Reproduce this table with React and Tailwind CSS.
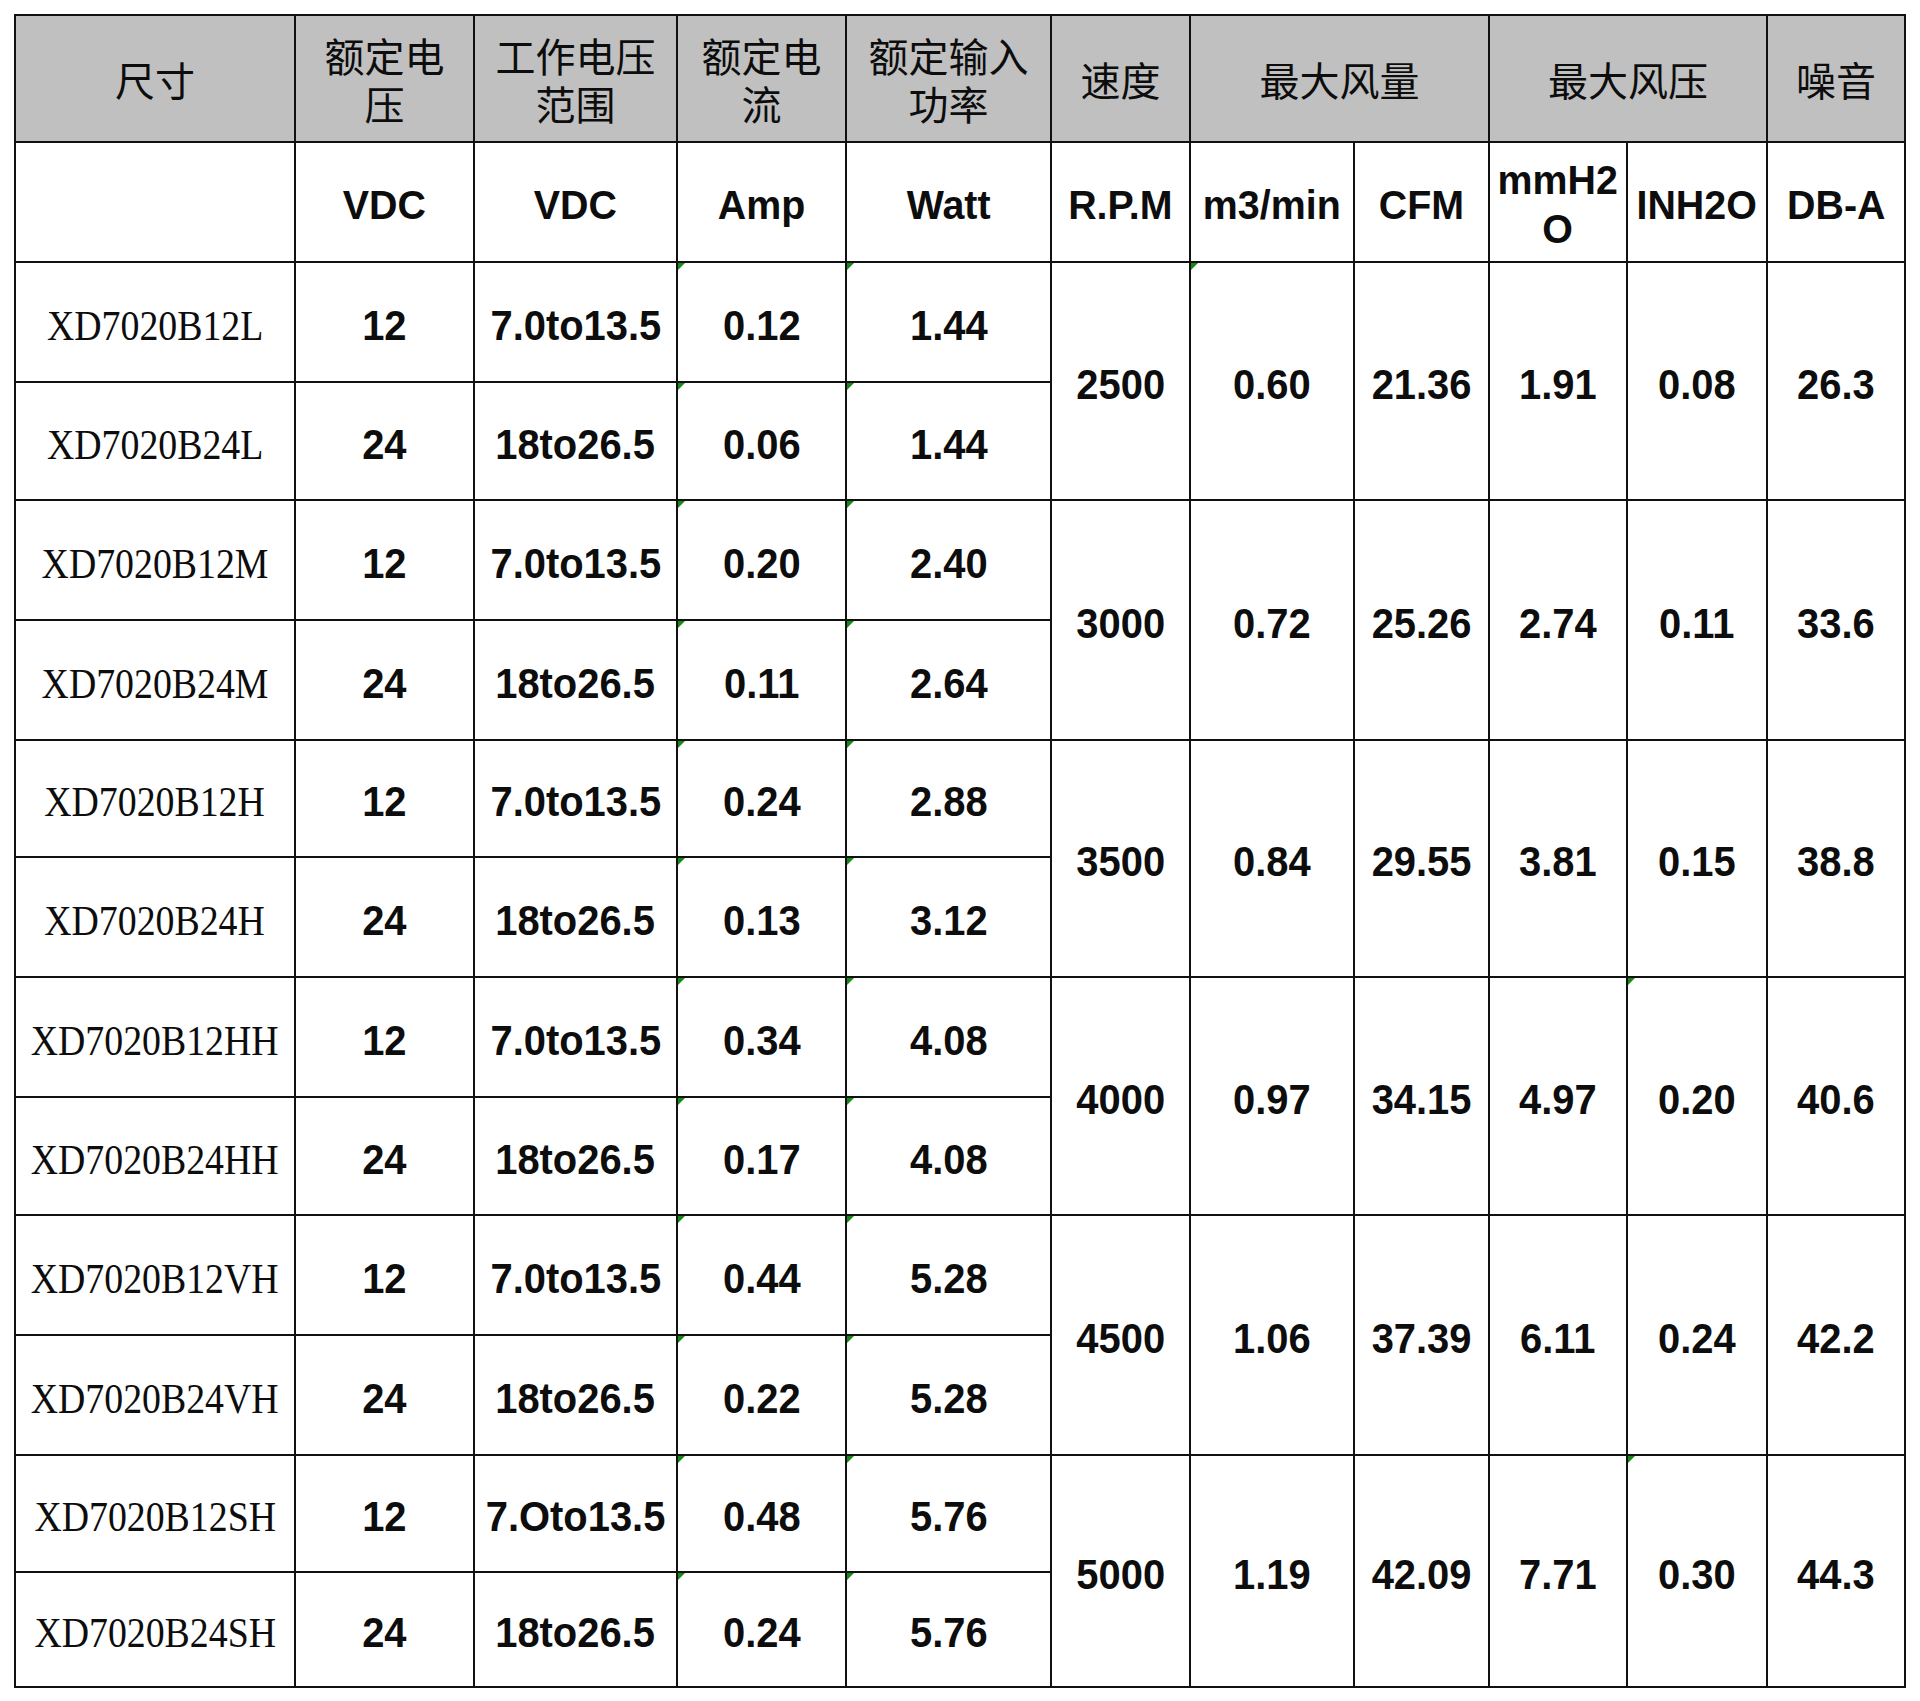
import React from 'react';

const cjk = "font-['Noto_Sans_CJK_SC',sans-serif]";
const num = "font-['Liberation_Sans',Arial,sans-serif] font-bold";
const serif = "font-['Liberation_Serif','Times_New_Roman',serif]";

const groups = [
  {
    rows: [
      ['XD7020B12L', '12', '7.0to13.5', '0.12', '1.44'],
      ['XD7020B24L', '24', '18to26.5', '0.06', '1.44'],
    ],
    merged: ['2500', '0.60', '21.36', '1.91', '0.08', '26.3'],
    flags: [2],
  },
  {
    rows: [
      ['XD7020B12M', '12', '7.0to13.5', '0.20', '2.40'],
      ['XD7020B24M', '24', '18to26.5', '0.11', '2.64'],
    ],
    merged: ['3000', '0.72', '25.26', '2.74', '0.11', '33.6'],
    flags: [],
  },
  {
    rows: [
      ['XD7020B12H', '12', '7.0to13.5', '0.24', '2.88'],
      ['XD7020B24H', '24', '18to26.5', '0.13', '3.12'],
    ],
    merged: ['3500', '0.84', '29.55', '3.81', '0.15', '38.8'],
    flags: [],
  },
  {
    rows: [
      ['XD7020B12HH', '12', '7.0to13.5', '0.34', '4.08'],
      ['XD7020B24HH', '24', '18to26.5', '0.17', '4.08'],
    ],
    merged: ['4000', '0.97', '34.15', '4.97', '0.20', '40.6'],
    flags: [5],
  },
  {
    rows: [
      ['XD7020B12VH', '12', '7.0to13.5', '0.44', '5.28'],
      ['XD7020B24VH', '24', '18to26.5', '0.22', '5.28'],
    ],
    merged: ['4500', '1.06', '37.39', '6.11', '0.24', '42.2'],
    flags: [],
  },
  {
    rows: [
      ['XD7020B12SH', '12', '7.Oto13.5', '0.48', '5.76'],
      ['XD7020B24SH', '24', '18to26.5', '0.24', '5.76'],
    ],
    merged: ['5000', '1.19', '42.09', '7.71', '0.30', '44.3'],
    flags: [5],
  },
];

// little green Excel error marker in a cell's top-left corner
function Flag() {
  return (
    <span className="absolute left-0 top-0 w-0 h-0 border-t-[7px] border-t-[#178a17] border-r-[7px] border-r-transparent" />
  );
}

function Cell({ children, className = '', flag = false }) {
  return (
    <div
      className={`relative flex items-center justify-center text-center border-r-2 border-b-2 border-[#111] text-[#0d0d0d] ${className}`}
    >
      {flag && <Flag />}
      {children}
    </div>
  );
}

// header label; each line in its own 48px box
function Head({ lines, className = '' }) {
  return (
    <Cell className={`bg-[#c0c0c0] ${cjk} text-[40px] leading-[40px] ${className}`}>
      <div className="flex flex-col">
        {lines.map((l) => (
          <div key={l} className="h-[48px] flex items-center justify-center">
            {l}
          </div>
        ))}
      </div>
    </Cell>
  );
}

function Num({ children, className = '', flag = false }) {
  return (
    <Cell className={`${num} text-[42px] ${className}`} flag={flag}>
      <span className="inline-block translate-y-[3px] scale-x-[0.95]">{children}</span>
    </Cell>
  );
}

function Unit({ children }) {
  return (
    <Cell className={`${num} text-[41px] leading-[49px]`}>
      <span className="inline-block translate-y-[3px] scale-x-[0.96]">{children}</span>
    </Cell>
  );
}

export default function App() {
  return (
    <div className="min-h-screen bg-white pt-[14px] pl-[14px]">
      <div className="grid w-[1892px] border-l-2 border-t-2 border-[#111] grid-cols-[280px_179px_203px_169px_205px_139px_164px_135px_138px_140px_138px] grid-rows-[127px_120px_120px_118px_120px_120px_117px_120px_120px_118px_120px_120px_117px_115px]">
        <Head lines={['尺寸']} />
        <Head lines={['额定电', '压']} />
        <Head lines={['工作电压', '范围']} />
        <Head lines={['额定电', '流']} />
        <Head lines={['额定输入', '功率']} />
        <Head lines={['速度']} />
        <Head className="col-span-2" lines={['最大风量']} />
        <Head className="col-span-2" lines={['最大风压']} />
        <Head lines={['噪音']} />

        <Unit />
        <Unit>VDC</Unit>
        <Unit>VDC</Unit>
        <Unit>Amp</Unit>
        <Unit>Watt</Unit>
        <Unit>R.P.M</Unit>
        <Unit>m3/min</Unit>
        <Unit>CFM</Unit>
        <Unit>mmH2<br />O</Unit>
        <Unit>INH2O</Unit>
        <Unit>DB-A</Unit>

        {groups.map((g, gi) => (
          <React.Fragment key={gi}>
            {g.rows.map((r, ri) => (
              <React.Fragment key={ri}>
                <Cell className={`${serif} text-[42px]`}>
                  <span className="inline-block translate-y-[4px] scale-x-[0.9]">{r[0]}</span>
                </Cell>
                <Num>{r[1]}</Num>
                <Num>{r[2]}</Num>
                <Num flag>{r[3]}</Num>
                <Num flag>{r[4]}</Num>
                {ri === 0 &&
                  g.merged.map((m, mi) => (
                    <Num key={mi} className="row-span-2" flag={g.flags.includes(mi + 1)}>
                      {m}
                    </Num>
                  ))}
              </React.Fragment>
            ))}
          </React.Fragment>
        ))}
      </div>
    </div>
  );
}
